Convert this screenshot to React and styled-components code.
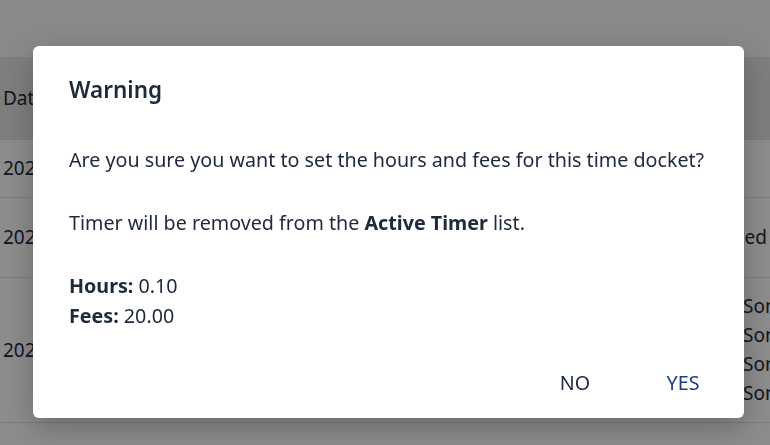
import React from 'react';
import styled, { createGlobalStyle } from 'styled-components';

const GlobalStyle = createGlobalStyle`
  html, body {
    margin: 0;
    padding: 0;
    width: 100%;
    height: 100%;
    overflow: hidden;
    background: #ffffff;
    font-family: "Noto Sans", "Open Sans", sans-serif;
    color: #1e293b;
  }
`

const Page = styled.div`
  width: 770px;
  height: 445px;
  display: flex;
  flex-direction: column;
  background: #ffffff;
  overflow: hidden;
`

const TopBar = styled.div`
  height: 57px;
  flex-shrink: 0;
  background: #fafafa;
`

const Table = styled.div`
  display: flex;
  flex-direction: column;
`

const Row = styled.div`
  display: grid;
  grid-template-columns: 669px 73px 1fr;
  align-items: center;
  box-sizing: border-box;
  height: ${p => p.h}px;
  background: ${p => (p.head ? '#e6e6e6' : '#ffffff')};
  border-bottom: 1px solid #e2e2e2;
  font-size: 19px;
  color: #1e293b;
`

const Cell = styled.div`
  padding-left: ${p => p.pad ?? 3}px;
  white-space: nowrap;
  line-height: 29px;
`

const Overlay = styled.div`
  position: fixed;
  inset: 0;
  background: rgba(0, 0, 0, 0.45);
`

const Dialog = styled.div`
  position: fixed;
  left: 33px;
  top: 46px;
  width: 711px;
  height: 372px;
  box-sizing: border-box;
  background: #ffffff;
  border-radius: 6px;
  box-shadow: 0 10px 30px rgba(0, 0, 0, 0.25);
  display: flex;
  flex-direction: column;
`

const Content = styled.div`
  padding: 27px 36px 0 36px;
`

const Title = styled.h2`
  margin: 0;
  font-size: 22.5px;
  font-weight: 600;
  line-height: 34px;
  color: #1e293b;
`

const Body = styled.div`
  margin-top: 38px;
  font-size: 19.7px;
  color: #1e293b;
`

const Para = styled.p`
  margin: 0 0 33px 0;
  line-height: 30px;
`

const Info = styled.div`
  line-height: 30px;
`

const Actions = styled.div`
  margin-top: auto;
  padding: 0 11px 16px 0;
  display: flex;
  justify-content: flex-end;
  align-items: center;
  gap: 8px;
`

const ActionButton = styled.button`
  border: none;
  background: transparent;
  font-family: inherit;
  font-size: 19.7px;
  text-transform: uppercase;
  color: ${p => (p.primary ? '#1e3a8a' : '#1e293b')};
  width: 100px;
  height: 40px;
  padding: 0;
  cursor: pointer;
`

const App = () => {
    return (
        <>
            <GlobalStyle />
            <Page>
                <TopBar />
                <Table>
                    <Row head h={83}>
                        <Cell>Date</Cell>
                        <Cell />
                        <Cell />
                    </Row>
                    <Row h={58}>
                        <Cell>2023-05-12</Cell>
                        <Cell />
                        <Cell />
                    </Row>
                    <Row h={80}>
                        <Cell>2023-05-11</Cell>
                        <Cell pad={0}>Completed</Cell>
                        <Cell />
                    </Row>
                    <Row h={145}>
                        <Cell>2023-05-10</Cell>
                        <Cell />
                        <Cell pad={1}>
                            <div>Some</div>
                            <div>Some</div>
                            <div>Some</div>
                            <div>Some</div>
                        </Cell>
                    </Row>
                </Table>
            </Page>
            <Overlay />
            <Dialog>
                <Content>
                    <Title>Warning</Title>
                    <Body>
                        <Para>Are you sure you want to set the hours and fees for this time docket?</Para>
                        <Para>Timer will be removed from the <b>Active Timer</b> list.</Para>
                        <Info><b>Hours:</b> 0.10</Info>
                        <Info><b>Fees:</b> 20.00</Info>
                    </Body>
                </Content>
                <Actions>
                    <ActionButton>No</ActionButton>
                    <ActionButton primary>Yes</ActionButton>
                </Actions>
            </Dialog>
        </>
    )
};

export default App;
